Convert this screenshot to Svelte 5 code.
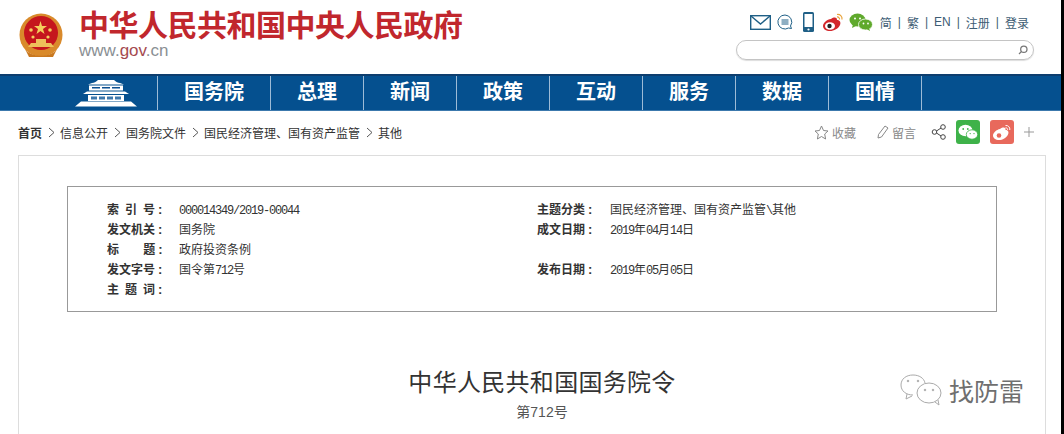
<script>
  const navItems = ['国务院', '总理', '新闻', '政策', '互动', '服务', '数据', '国情'];
  const crumbs = ['信息公开', '国务院文件', '国民经济管理、国有资产监管', '其他'];
  const leftRows = [
    { label: '索 引 号', value: '000014349/2019-00044' },
    { label: '发文机关', value: '国务院' },
    { label: '标    题', value: '政府投资条例' },
    { label: '发文字号', value: '国令第712号' },
    { label: '主 题 词', value: '' }
  ];
  const rightRows = [
    { label: '主题分类', value: '国民经济管理、国有资产监管\\其他' },
    { label: '成文日期', value: '2019年04月14日' },
    { label: '', value: '' },
    { label: '发布日期', value: '2019年05月05日' }
  ];

  // ascii runs get their own narrow font, like the half width digits of the old page
  const runs = (text) => text.split(/([\x00-\x7f]+)/).filter(Boolean);
  const isAscii = (text) => /^[\x00-\x7f]+$/.test(text);
</script>

<div class="page">
  <div class="sheet">
    <header class="top">
      <div class="brand">
        <svg class="emblem" width="46" height="50" viewBox="0 0 46 50">
          <circle cx="23" cy="24" r="21.500" fill="#d98a2b" />
          <circle cx="23" cy="22" r="17" fill="#c5161d" />
          <polygon points="22.500,10 24,15 29,15 25,18 26.500,23 22.500,20 18.500,23 20,18 16,15 21,15" fill="#f4cf5d" />
          <circle cx="13" cy="19" r="1.800" fill="#f4cf5d" />
          <circle cx="32" cy="19" r="1.800" fill="#f4cf5d" />
          <circle cx="15" cy="26" r="1.600" fill="#f4cf5d" />
          <circle cx="30" cy="26" r="1.600" fill="#f4cf5d" />
          <path d="M10 36h26l-3-4h-5v-4H18v4h-5z" fill="#eec15a" />
          <path d="M7 38c5 9 27 9 32 0l-4 8H11z" fill="#c9781f" />
        </svg>
        <div class="brand-text">
          <div class="brand-name">中华人民共和国中央人民政府</div>
          <div class="brand-url">www.<b>gov</b>.cn</div>
        </div>
      </div>

      <div class="tools">
        <div class="tool-row">
          <svg class="i-mail" width="21" height="15" viewBox="0 0 21 15" fill="none" stroke="#1f5f86" stroke-width="1.400">
            <rect x="0.700" y="0.700" width="19.600" height="13.600" />
            <path d="M1 1l9.500 8L20 1" />
          </svg>
          <svg class="i-chat" width="16" height="16" viewBox="0 0 16 16" fill="none" stroke="#1f5f86" stroke-width="1">
            <path d="M8 1a7 7 0 1 0 3.500 13l3 .5-1-2.500A7 7 0 0 0 8 1z" />
            <path d="M4.500 6h7M4.500 8h7M4.500 10h7" />
          </svg>
          <svg class="i-phone" width="11" height="20" viewBox="0 0 11 20">
            <rect x="0" y="0" width="11" height="20" rx="1.500" fill="#1f5f86" />
            <rect x="1.500" y="2" width="8" height="13" fill="#fff" />
            <circle cx="5.500" cy="17.500" r="1.100" fill="#fff" />
          </svg>
          <svg class="i-weibo" width="22" height="19" viewBox="0 0 22 19">
            <path d="M9 6c3-2 6-2 6 1 3 0 4 2.500 3 5-1.500 3.500-6 6-10 6-4 0-7-2-7-5 0-3 4-7 8-7z" fill="#d3282c" />
            <ellipse cx="8" cy="13" rx="5" ry="3.800" fill="#fff" />
            <circle cx="7.500" cy="13" r="2.200" fill="#222" />
            <path d="M15 1.500c3-.5 5.500 2 5 5M15 4c1.500-.3 2.800 1 2.500 2.500" fill="none" stroke="#e8a33a" stroke-width="1.200" />
          </svg>
          <svg class="i-wechat" width="24" height="19" viewBox="0 0 24 19">
            <ellipse cx="8.500" cy="7" rx="8" ry="6.500" fill="#5fa92c" />
            <path d="M4 11l-1 4 4-2z" fill="#5fa92c" />
            <ellipse cx="16.500" cy="11.500" rx="7" ry="5.500" fill="#5fa92c" stroke="#fff" stroke-width="0.800" />
            <path d="M20 15l1 3-3.500-2z" fill="#5fa92c" />
            <circle cx="6" cy="5.500" r="1" fill="#fff" />
            <circle cx="11" cy="5.500" r="1" fill="#fff" />
            <circle cx="14.500" cy="10.500" r="0.900" fill="#fff" />
            <circle cx="19" cy="10.500" r="0.900" fill="#fff" />
          </svg>
          <div class="links">
            <span>简</span><i>|</i><span>繁</span><i>|</i><span>EN</span><i>|</i><span>注册</span><i>|</i><span>登录</span>
          </div>
        </div>
        <div class="search">
          <svg width="10" height="10" viewBox="0 0 12 12" fill="none" stroke="#777" stroke-width="1.500">
            <circle cx="7" cy="5" r="3.800" />
            <path d="M4.300 7.700L1.200 10.800" />
          </svg>
        </div>
      </div>
    </header>

    <nav class="nav">
      <div class="nav-home">
        <svg width="62" height="27" viewBox="0 0 62 27">
          <path d="M17 3c2 0 4-1 6-3h16c2 2 4 3 6 3l4 1.500H13z" fill="#fff" />
          <path d="M14 5.500h34v5H14z" fill="#fff" />
          <path d="M17 7h8v1.500h-8zM27 7h8v1.500h-8zM37 7h8v1.500h-8z" fill="#0b4f90" />
          <path d="M12 11.500h38l4 2.500H8z" fill="#fff" />
          <path d="M13 15h36v6H13z" fill="#fff" />
          <path d="M16 16.500h6v3h-6zM24 16.500h6v3h-6zM32 16.500h6v3h-6zM40 16.500h6v3h-6z" fill="#3f79ad" />
          <path d="M6 21.500h50l6 5H0z" fill="#fff" />
        </svg>
      </div>
      {#each navItems as item}
        <a class="nav-item" href="#{item}">{item}</a>
      {/each}
    </nav>

    <div class="bar">
      <div class="crumbs">
        <b>首页</b>
        {#each crumbs as c}
          <svg class="arrow" width="7" height="11" viewBox="0 0 7 11" fill="none" stroke="#555" stroke-width="1">
            <path d="M1 1l5 4.500-5 4.500" />
          </svg>
          <span>{c}</span>
        {/each}
      </div>
      <div class="actions">
        <span class="act fav">
          <svg width="15" height="15" viewBox="0 0 15 15" fill="none" stroke="#888" stroke-width="1">
            <polygon points="7.500,1 9.500,5.500 14,6 10.700,9 11.600,14 7.500,11.500 3.400,14 4.300,9 1,6 5.500,5.500" />
          </svg>
          收藏
        </span>
        <span class="act msg">
          <svg width="13" height="14" viewBox="0 0 13 14" fill="none" stroke="#888" stroke-width="1">
            <path d="M9 1l3 2-6.500 9L2 13l.5-3.500z" />
          </svg>
          留言
        </span>
        <svg class="share" width="16" height="16" viewBox="0 0 16 16" fill="none" stroke="#444" stroke-width="1">
          <circle cx="3.500" cy="8" r="2.300" />
          <circle cx="12" cy="3" r="2.300" />
          <circle cx="12" cy="13" r="2.300" />
          <path d="M5.500 7l4.500-3M5.500 9l4.500 3" />
        </svg>
        <span class="square wx">
          <svg width="20" height="17" viewBox="0 0 20 17">
            <ellipse cx="7.500" cy="6.500" rx="7" ry="5.800" fill="#fff" />
            <ellipse cx="14" cy="10.500" rx="5.700" ry="4.700" fill="#fff" stroke="#3eb249" stroke-width="0.800" />
            <circle cx="5.200" cy="5" r="0.900" fill="#3eb249" />
            <circle cx="9.800" cy="5" r="0.900" fill="#3eb249" />
            <circle cx="12.200" cy="9.600" r="0.700" fill="#3eb249" />
            <circle cx="16" cy="9.600" r="0.700" fill="#3eb249" />
          </svg>
        </span>
        <span class="square wb">
          <svg width="20" height="17" viewBox="0 0 20 17">
            <path d="M8 5c3-2 6-2 5.500 1 3 0 3.500 2.500 2.500 4.500C14.500 14 10.500 16 7 16c-3.500 0-6-2-6-4.500C1 9 4.500 5.500 8 5z" fill="#fff" />
            <circle cx="7" cy="11.500" r="2.300" fill="#e8695c" />
            <path d="M13.500 1.500c2.500-.4 4.800 1.800 4.300 4.500M13.500 3.800c1.300-.2 2.300.8 2.100 2" fill="none" stroke="#fff" stroke-width="1" />
          </svg>
        </span>
        <svg class="plus" width="10" height="10" viewBox="0 0 10 10" stroke="#999" stroke-width="1">
          <path d="M5 0v10M0 5h10" />
        </svg>
      </div>
    </div>

    <section class="panel">
      <div class="info">
        <div class="col col-left">
          {#each leftRows as row}
            <div class="row">
              <span class="label">{row.label}</span>
              <span class="value">
                {#each runs(row.value) as run}
                  <span class:ascii={isAscii(run)}>{run}</span>
                {/each}
              </span>
            </div>
          {/each}
        </div>
        <div class="col col-right">
          {#each rightRows as row}
            <div class="row">
              <span class="label">{row.label}</span>
              <span class="value">
                {#each runs(row.value) as run}
                  <span class:ascii={isAscii(run)}>{run}</span>
                {/each}
              </span>
            </div>
          {/each}
        </div>
      </div>

      <h1 class="title">中华人民共和国国务院令</h1>
      <p class="subtitle">第712号</p>

      <div class="watermark">
        <svg width="44" height="34" viewBox="0 0 44 34" fill="none" stroke="#aaa" stroke-width="1">
          <path d="M14 22c-7 0-12-4-12-10S7 2 14 2c6 0 11 3 12 8" />
          <path d="M8 21l-1 5 6-3" />
          <ellipse cx="30" cy="20" rx="12" ry="10" />
          <path d="M36 29l4 3-1-5" />
          <circle cx="9" cy="8" r="0.800" fill="#aaa" />
          <circle cx="19" cy="8" r="0.800" fill="#aaa" />
          <circle cx="26" cy="17" r="0.800" fill="#aaa" />
          <circle cx="34" cy="17" r="0.800" fill="#aaa" />
        </svg>
        <span>找防雷</span>
      </div>
    </section>
  </div>
</div>

<style>
  :global(body) {
    margin: 0;
    background: #000;
    overflow: hidden;
  }

  .page {
    width: 1064px;
    height: 434px;
    overflow: hidden;
    background: #000; /* the capture has a thin black strip on the right */
    color: #333;
    font-family: "Liberation Sans", "Noto Sans CJK SC", sans-serif;
  }

  .sheet {
    width: 1061px;
    height: 434px;
    overflow: hidden;
    background: #fff;
  }

  .top {
    height: 74px;
    display: flex;
    justify-content: space-between;
    box-sizing: border-box;
    padding: 0 27px 0 18px;
  }

  .brand {
    display: flex;
    align-items: flex-start;
    gap: 15px;
    padding-top: 11px;
  }

  .brand-name {
    font-size: 30px;
    line-height: 30px;
    font-weight: 700;
    color: #c1272d;
    letter-spacing: -0.500px;
  }

  .brand-url {
    font-size: 17px;
    line-height: 19px;
    color: #8a8f94;
  }

  .brand-url b {
    font-weight: 400;
    color: #a54a50;
  }

  .tools {
    display: flex;
    flex-direction: column;
    align-items: flex-end;
    padding-top: 12px;
  }

  .tool-row {
    height: 20px;
    margin-right: 5px;
    display: flex;
    align-items: center;
  }

  .i-chat {
    margin-left: 6px;
  }

  .i-phone {
    margin-left: 10px;
  }

  .i-weibo {
    margin-left: 8px;
  }

  .i-wechat {
    margin-left: 5px;
  }

  .links {
    display: flex;
    align-items: center;
    margin-left: 7px;
    font-size: 12px;
    color: #3d5c74;
  }

  .links i {
    font-style: normal;
    margin: 0 6px;
    color: #3d5c74;
  }

  .search {
    width: 298px;
    height: 20px;
    margin-top: 8px;
    box-sizing: border-box;
    border: 1px solid #c4c4c4;
    border-radius: 10px;
    box-shadow: 0 1px 1px #ddd;
    display: flex;
    align-items: center;
    justify-content: flex-end;
    padding-right: 5px;
  }

  .nav {
    height: 37px;
    box-sizing: border-box;
    background: #05508f;
    display: flex;
    border-top: 2px solid #0d3d6e;
    border-bottom: 1px solid #3c79ad;
  }

  .nav-home {
    width: 158px;
    display: flex;
    justify-content: flex-end;
    align-items: center;
    padding-right: 20px;
    box-sizing: border-box;
    border-right: 1px solid #9dbbd6;
  }

  .nav-item {
    width: 93px;
    box-sizing: border-box;
    border-right: 1px solid #9dbbd6;
    color: #fff;
    font-size: 20px;
    font-weight: 700;
    text-align: center;
    line-height: 33px;
    text-decoration: none;
  }

  .nav-item:first-of-type {
    width: 113px;
  }

  .bar {
    height: 44px;
    box-sizing: border-box;
    display: flex;
    justify-content: space-between;
    align-items: center;
    padding: 0 27px 2px 18px;
    font-size: 12px;
  }

  .crumbs {
    display: flex;
    align-items: center;
    color: #333;
  }

  .crumbs b {
    font-weight: 700;
  }

  .arrow {
    margin: 0 5px 0 6px;
  }

  .actions {
    display: flex;
    align-items: center;
    color: #888;
  }

  .act {
    display: flex;
    align-items: center;
    gap: 3px;
  }

  .fav {
    margin-right: 20px;
  }

  .msg {
    margin-right: 15px;
  }

  .share {
    margin-right: 9px;
  }

  .square {
    width: 24px;
    height: 24px;
    border-radius: 3px;
    display: flex;
    align-items: center;
    justify-content: center;
    margin-right: 10px;
  }

  .wx {
    background: #3eb249;
  }

  .wb {
    background: #e8695c;
  }

  .panel {
    position: relative;
    margin: 0 15px 0 18px;
    height: 400px;
    box-sizing: border-box;
    border: 1px solid #ddd;
    padding: 30px 48px 0 48px;
  }

  .info {
    height: 126px;
    box-sizing: border-box;
    border: 1px solid #999;
    display: flex;
    padding: 13px 0 0 39px;
    font-size: 12px;
  }

  .col-left {
    width: 430px;
  }

  .row {
    height: 20px;
    line-height: 20px;
    display: flex;
  }

  .label {
    font-weight: 700;
    font-size: 12px;
    word-spacing: 2.700px;
    color: #333;
    white-space: pre;
  }

  .label:not(:empty)::after {
    content: ':';
    margin-left: 3px;
    font-size: 13px;
  }

  .col-left .label {
    width: 72px;
  }

  .col-right .label {
    width: 73px;
  }

  .value {
    color: #333;
    white-space: nowrap;
  }

  .ascii {
    font-family: "Liberation Mono", monospace;
    letter-spacing: -1.200px;
  }

  .title {
    margin: 55px 0 0 20px;
    text-align: center;
    font-size: 24px;
    line-height: 32px;
    font-weight: 400;
    letter-spacing: 0.300px;
    color: #333;
  }

  .subtitle {
    margin: 4px 0 0 20px;
    text-align: center;
    font-size: 14px;
    line-height: 18px;
    color: #555;
  }

  .watermark {
    position: absolute;
    left: 880px;
    top: 216px;
    display: flex;
    align-items: center;
    gap: 6px;
    font-size: 25px;
    color: #6f6f6f;
  }
</style>
